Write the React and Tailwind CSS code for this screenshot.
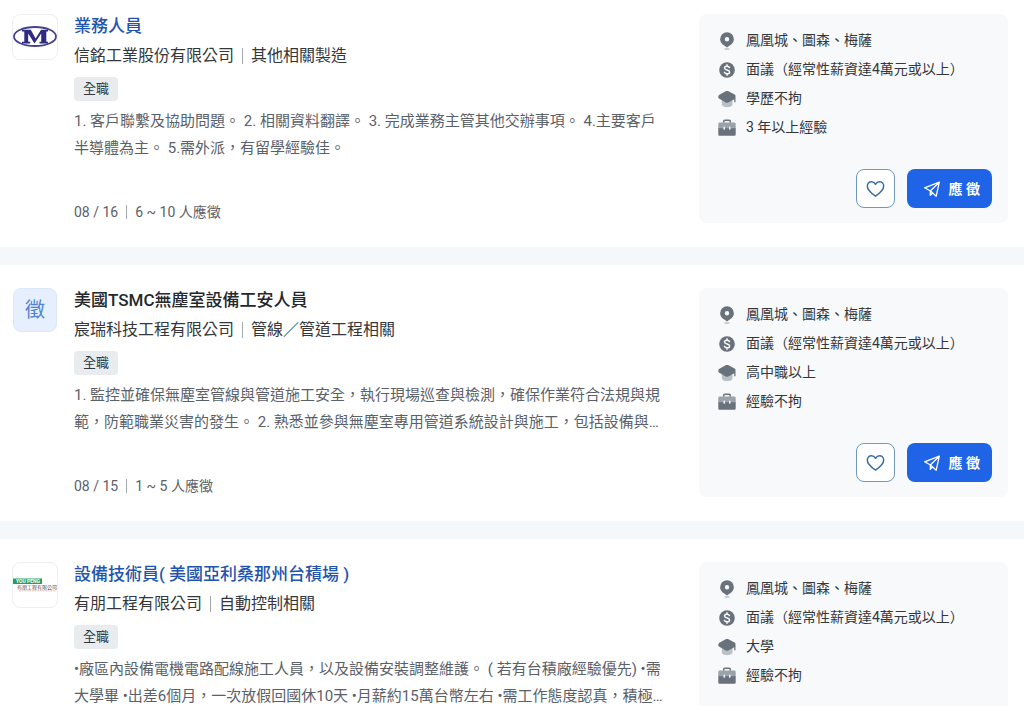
import React, { useState } from 'react';

const jobs = [
    {
        id: 1,
        title: '業務人員',
        visited: true,
        logo: 'ming',
        company: '信銘工業股份有限公司',
        industry: '其他相關製造',
        desc: '1. 客戶聯繫及協助問題。 2. 相關資料翻譯。 3. 完成業務主管其他交辦事項。 4.主要客戶半導體為主。 5.需外派，有留學經驗佳。',
        date: '08 / 16',
        applicants: '6 ~ 10 人應徵',
        education: '學歷不拘',
        experience: '3 年以上經驗'
    },
    {
        id: 2,
        title: '美國TSMC無塵室設備工安人員',
        visited: false,
        logo: null,
        company: '宸瑞科技工程有限公司',
        industry: '管線／管道工程相關',
        desc: '1. 監控並確保無塵室管線與管道施工安全，執行現場巡查與檢測，確保作業符合法規與規範，防範職業災害的發生。 2. 熟悉並參與無塵室專用管道系統設計與施工，包括設備與…',
        date: '08 / 15',
        applicants: '1 ~ 5 人應徵',
        education: '高中職以上',
        experience: '經驗不拘'
    },
    {
        id: 3,
        title: '設備技術員( 美國亞利桑那州台積場 )',
        visited: true,
        logo: 'youpeng',
        company: '有朋工程有限公司',
        industry: '自動控制相關',
        desc: '•廠區內設備電機電路配線施工人員，以及設備安裝調整維護。 ( 若有台積廠經驗優先) •需大學畢 •出差6個月，一次放假回國休10天 •月薪約15萬台幣左右 •需工作態度認真，積極…',
        education: '大學',
        experience: '經驗不拘'
    }
];

const PinIcon = () => (
    <svg width="18" height="18" viewBox="0 0 18 18" aria-hidden="true">
        <ellipse cx="9" cy="17" rx="3" ry="0.8" fill="#b4bbc2" />
        <path fillRule="evenodd" fill="#69727c" d="M9 0.3a6.900 6.900 0 0 0-6.900 6.900c0 3 2 4.900 4.200 6.400L9 15.500l2.700-1.900c2.200-1.500 4.200-3.400 4.200-6.400A6.900 6.900 0 0 0 9 .3zm0 4.700a2.200 2.200 0 1 1 0 4.400 2.200 2.200 0 0 1 0-4.400z" />
    </svg>
);

const MoneyIcon = () => (
    <svg width="18" height="18" viewBox="0 0 18 18" aria-hidden="true">
        <circle cx="9" cy="9" r="7.8" fill="#69727c" />
        <path d="M11.500 6.600C11 5.600 10 5.300 9 5.300c-1.400 0-2.500.7-2.500 1.800C6.500 9.700 11.600 8.200 11.600 10.900c0 1.200-1.200 1.900-2.600 1.900-1.200 0-2.200-.5-2.600-1.500M9 3.700v1.600M9 12.800v1.500" fill="none" stroke="#fff" strokeWidth="1.400" strokeLinecap="round" />
    </svg>
);

const SchoolIcon = () => (
    <svg width="18" height="18" viewBox="0 0 18 18" aria-hidden="true">
        <path d="M3.800 8.500h10.700v5.800c0 1.800-2.600 2.900-5.300 2.900s-5.400-1.100-5.400-2.900z" fill="#b9c0c7" />
        <path d="M8.100 1.100a2.500 2.500 0 0 1 1.900 0l6.600 3.500c1 .5 1 1.400.9 2.100v5c0 .9-1.300.9-1.300 0V9.200l-5.800 3.200a3 3 0 0 1-2.700 0L1 8.600C.1 8 0 6.500 1 5z" fill="#69727c" />
    </svg>
);

const BriefcaseIcon = () => (
    <svg width="18" height="18" viewBox="0 0 18 18" aria-hidden="true">
        <path d="M5.700 3.800V2.500c0-.7.5-1.200 1.200-1.200h4.200c.7 0 1.200.5 1.200 1.200v1.300" fill="none" stroke="#69727c" strokeWidth="1.500" />
        <path d="M1.800 3.500h14.400c.9 0 1.500.6 1.500 1.500v5H.3V5c0-.9.6-1.500 1.500-1.500z" fill="#9aa2aa" />
        <path d="M.3 9.200h17.400v6.300c0 .8-.6 1.300-1.300 1.300H1.600c-.7 0-1.300-.5-1.300-1.300z" fill="#69727c" />
        <path d="M6.200 8.300v1.800M11.800 8.300v1.800" stroke="#eef1f4" strokeWidth="1.600" strokeLinecap="round" />
    </svg>
);

const HeartIcon = ({ filled }) => (
    <svg width="20" height="20" viewBox="0 0 20 20" fill={filled ? 'currentColor' : 'none'} stroke="currentColor" strokeWidth="1.500" strokeLinejoin="round" aria-hidden="true">
        <path d="M10.500 17.200C7.500 15.200 2.300 11.300 2.300 7.100c0-2.500 1.800-4.300 4.100-4.300 1.700 0 3.200.9 4.100 2.500.9-1.600 2.400-2.500 4.100-2.500 2.300 0 4.100 1.800 4.100 4.300 0 4.200-5.200 8.100-8.200 10.100z" />
    </svg>
);

const SendIcon = () => (
    <svg width="18" height="18" viewBox="0 0 18 18" fill="none" stroke="currentColor" strokeWidth="1.300" strokeLinejoin="round" strokeLinecap="round" aria-hidden="true">
        <path d="M16.300 2.200 1.600 7.800l5 2.700 1.500 1.100 5.100 4.600zM16.300 2.200 7.300 11v4.300l2.200-2.300" />
    </svg>
);

const MingLogo = () => (
    <svg width="44" height="44" viewBox="0 0 44 44" aria-hidden="true">
        <ellipse cx="22" cy="21.500" rx="21" ry="9.500" fill="#fff" stroke="#45448a" strokeWidth="1.800" />
        <path d="M9 14.800h8.800l4.800 8.700 5.500-8.700H35v1.600h-1.700v10.400H35v1.600h-8.500v-1.600h1.700v-8.300L21.500 28.500l-6.300-10v8.300h2v1.600H9v-1.600h2.300V16.400H9z" fill="#2e2b80" />
    </svg>
);

const YoupengLogo = () => (
    <svg width="44" height="44" viewBox="0 0 44 44" aria-hidden="true">
        <rect x="0" y="15.500" width="29" height="5.500" fill="#23a05a" />
        <text x="3" y="20" fontSize="5" fontWeight="700" fontFamily="Roboto, sans-serif" fill="#fff">YOU PENG</text>
        <text x="4" y="26.300" fontSize="5" fontFamily="'Noto Sans CJK TC', sans-serif" fill="#555">有朋工程有限公司</text>
        <path d="M6 27.800h37" stroke="#c9a9a9" strokeWidth="0.700" strokeDasharray="2 0.600" />
    </svg>
);

const Logo = ({ type }) => {
    if (!type) {
        return (
            <div className="w-[46px] shrink-0">
                <div className="mx-auto flex size-11 items-center justify-center rounded-lg border border-[#dbe8fa] bg-[#e6effd] text-xl text-[#4f82d2]">徵</div>
            </div>
        );
    }
    return (
        <div className="flex size-[46px] shrink-0 items-center justify-center overflow-hidden rounded-lg border border-[#eceef1] bg-white">
            {type === 'ming' ? <MingLogo /> : <YoupengLogo />}
        </div>
    );
};

const InfoRow = ({ icon, children }) => (
    <li className="flex items-center gap-2.5 text-sm leading-[29px]">
        {icon}
        <span>{children}</span>
    </li>
);

const JobCard = ({ job }) => {
    const [saved, setSaved] = useState(false);

    return (
        <article className="flex bg-white pt-[23px] pr-4 pb-6 pl-3 first:pt-3.5">
            <Logo type={job.logo} />

            <div className="ml-4 flex min-w-0 flex-1 flex-col pb-px">
                <h2 className="text-[17px] leading-6 font-medium">
                    <a href="#" className={job.visited ? 'text-[#1f55ad]' : 'text-[#26282b]'}>{job.title}</a>
                </h2>
                <div className="mt-1 flex items-center text-base leading-7 text-[#34373b]">
                    <a href="#">{job.company}</a>
                    <span className="mx-2 h-4 w-px bg-[#a3a9af]"></span>
                    <span>{job.industry}</span>
                </div>
                <div className="mt-[7px] flex">
                    <span className="rounded bg-[#e8ecef] px-[9px] text-[13px] leading-6 text-[#34373b]">全職</span>
                </div>
                <p className="mt-[7px] mr-8 line-clamp-2 text-[15px] leading-[27px] text-[#5b6169]">{job.desc}</p>
                {job.date && (
                    <div className="mt-auto flex items-center text-sm leading-5 text-[#5b6169]">
                        <span>{job.date}</span>
                        <span className="mx-2 h-3.5 w-px bg-[#a3a9af]"></span>
                        <span>{job.applicants}</span>
                    </div>
                )}
            </div>

            <aside className="w-[309px] shrink-0 rounded-lg bg-[#f7f9fb] pt-3 pr-4 pb-[15px] pl-[19px] text-[#34373b]">
                <ul>
                    <InfoRow icon={<PinIcon />}>鳳凰城、圖森、梅薩</InfoRow>
                    <InfoRow icon={<MoneyIcon />}>面議（經常性薪資達4萬元或以上）</InfoRow>
                    <InfoRow icon={<SchoolIcon />}>{job.education}</InfoRow>
                    <InfoRow icon={<BriefcaseIcon />}>{job.experience}</InfoRow>
                </ul>
                <div className="mt-[27px] flex justify-end gap-3">
                    <button
                        type="button"
                        aria-label="收藏"
                        aria-pressed={saved}
                        onClick={() => setSaved(!saved)}
                        className="flex size-[39px] items-center justify-center rounded-lg border border-[#6f98c4] bg-white text-[#3a6ea8]"
                    >
                        <HeartIcon filled={saved} />
                    </button>
                    <button type="button" className="flex h-[39px] items-center gap-2 rounded-lg bg-[#1f63e6] pr-3 pl-4 text-sm font-bold text-white">
                        <SendIcon />
                        <span>應 徵</span>
                    </button>
                </div>
            </aside>
        </article>
    );
};

const App = () => {
    return (
        <main lang="zh-Hant" className="flex flex-col gap-[18px] bg-[#f5f8fb] font-[Roboto,'Noto_Sans_CJK_TC',sans-serif]">
            {jobs.map((job) => (
                <JobCard key={job.id} job={job} />
            ))}
        </main>
    );
};

export default App;
